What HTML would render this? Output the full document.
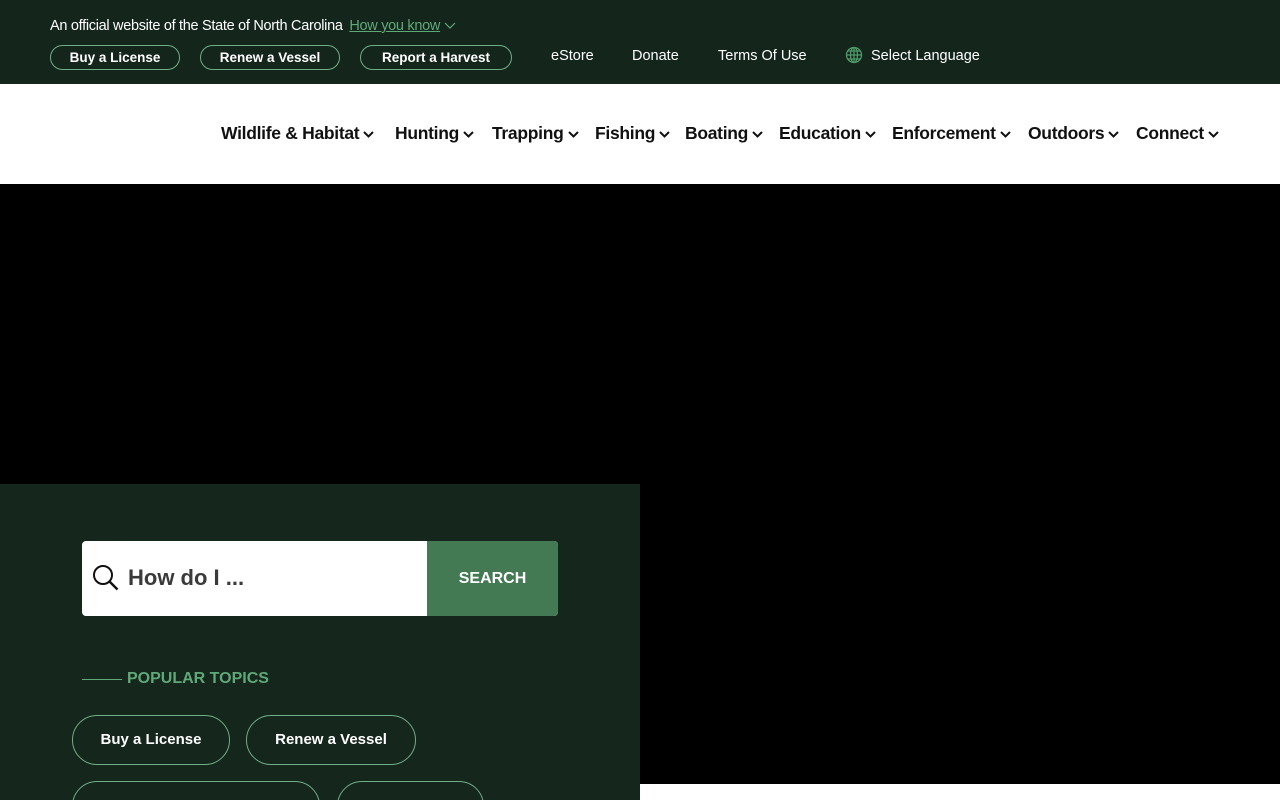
<!DOCTYPE html>
<html style="width:1280px;height:800px;overflow:hidden"><head><meta charset="utf-8"><style>
*{margin:0;padding:0;box-sizing:border-box}
body{width:1280px;height:800px;overflow:hidden;background:#000;font-family:"Liberation Sans",sans-serif;position:relative}
.a{position:absolute;white-space:nowrap}
#top{position:absolute;left:0;top:0;width:1280px;height:84px;background:#14261c;color:#fff}
.pill{position:absolute;border:1px solid #6fae86;border-radius:13px;height:25px;top:45px;font-weight:bold;font-size:13.5px;color:#fff;text-align:center;line-height:23px}
.tl{position:absolute;top:48px;font-size:14.5px;color:#fff}
#nav{position:absolute;left:0;top:84px;width:1280px;height:100px;background:#fff}
.n{position:absolute;top:39px;font-size:17.5px;font-weight:bold;color:#111;white-space:nowrap;letter-spacing:-0.3px}
.n svg{margin-left:4px;vertical-align:1px}
#panel{position:absolute;left:0;top:484px;width:640px;height:316px;background:#15261c;overflow:hidden}
.bp{position:absolute;border:1px solid #6fae86;border-radius:26px;height:50px;font-weight:bold;font-size:15px;color:#fff;text-align:center;line-height:48px}
</style></head><body>
<div id="top">
<div class="a" style="left:50px;top:18px;font-size:14.5px;letter-spacing:-0.3px">An official website of the State of North Carolina <span style="color:#5fa878;text-decoration:underline;margin-left:3px">How you know</span> <svg width="12" height="8" viewBox="0 0 12 8"><path d="M1 1l5 5 5-5" stroke="#5fa878" fill="none" stroke-width="1.2"/></svg></div>
<div class="pill" style="left:50px;width:130px">Buy a License</div>
<div class="pill" style="left:200px;width:140px">Renew a Vessel</div>
<div class="pill" style="left:360px;width:152px">Report a Harvest</div>
<div class="tl" style="left:551px">eStore</div>
<div class="tl" style="left:632px">Donate</div>
<div class="tl" style="left:718px">Terms Of Use</div>
<svg class="a" style="left:845px;top:46px" width="18" height="18" viewBox="0 0 18 18" fill="none" stroke="#4f9a68" stroke-width="1.3"><circle cx="9" cy="9" r="7.5"/><ellipse cx="9" cy="9" rx="3.5" ry="7.5"/><path d="M1.5 9h15M3 5h12M3 13h12M9 1.5v15"/></svg>
<div class="tl" style="left:871px">Select Language</div>
</div>
<div id="nav">
<div class="n" style="left:221px">Wildlife &amp; Habitat<svg width="11" height="7" viewBox="0 0 11 7"><path d="M1 1l4.5 4.5L10 1" stroke="#111" stroke-width="2" fill="none"/></svg></div>
<div class="n" style="left:395px">Hunting<svg width="11" height="7" viewBox="0 0 11 7"><path d="M1 1l4.5 4.5L10 1" stroke="#111" stroke-width="2" fill="none"/></svg></div>
<div class="n" style="left:492px">Trapping<svg width="11" height="7" viewBox="0 0 11 7"><path d="M1 1l4.5 4.5L10 1" stroke="#111" stroke-width="2" fill="none"/></svg></div>
<div class="n" style="left:595px">Fishing<svg width="11" height="7" viewBox="0 0 11 7"><path d="M1 1l4.5 4.5L10 1" stroke="#111" stroke-width="2" fill="none"/></svg></div>
<div class="n" style="left:685px">Boating<svg width="11" height="7" viewBox="0 0 11 7"><path d="M1 1l4.5 4.5L10 1" stroke="#111" stroke-width="2" fill="none"/></svg></div>
<div class="n" style="left:779px">Education<svg width="11" height="7" viewBox="0 0 11 7"><path d="M1 1l4.5 4.5L10 1" stroke="#111" stroke-width="2" fill="none"/></svg></div>
<div class="n" style="left:892px">Enforcement<svg width="11" height="7" viewBox="0 0 11 7"><path d="M1 1l4.5 4.5L10 1" stroke="#111" stroke-width="2" fill="none"/></svg></div>
<div class="n" style="left:1028px">Outdoors<svg width="11" height="7" viewBox="0 0 11 7"><path d="M1 1l4.5 4.5L10 1" stroke="#111" stroke-width="2" fill="none"/></svg></div>
<div class="n" style="left:1136px">Connect<svg width="11" height="7" viewBox="0 0 11 7"><path d="M1 1l4.5 4.5L10 1" stroke="#111" stroke-width="2" fill="none"/></svg></div>
</div>
<div class="a" style="left:640px;top:784px;width:640px;height:16px;background:#fff"></div>
<div id="panel">
<div class="a" style="left:82px;top:57px;width:476px;height:75px;background:#fff;border-radius:4px;overflow:hidden">
<svg class="a" style="left:10px;top:23px" width="28" height="28" viewBox="0 0 28 28" fill="none" stroke="#111" stroke-width="2"><circle cx="11" cy="11" r="9"/><path d="M17.5 17.5l8 8" stroke-width="2.5"/></svg>
<div class="a" style="left:46px;top:24px;font-size:22px;font-weight:bold;color:#3a3a3a">How do I ...</div>
<div class="a" style="left:345px;top:0;width:131px;height:75px;background:#437a54;color:#fff;font-weight:bold;font-size:16px;text-align:center;line-height:75px">SEARCH</div>
</div>
<div class="a" style="left:82px;top:195px;width:40px;height:1px;background:#5fa878"></div>
<div class="a" style="left:127px;top:186px;font-size:16px;font-weight:bold;color:#5fa878">POPULAR TOPICS</div>
<div class="bp" style="left:72px;top:231px;width:158px">Buy a License</div>
<div class="bp" style="left:246px;top:231px;width:170px">Renew a Vessel</div>
<div class="bp" style="left:72px;top:297px;width:248px"></div>
<div class="bp" style="left:337px;top:297px;width:147px"></div>
</div>
</body></html>
